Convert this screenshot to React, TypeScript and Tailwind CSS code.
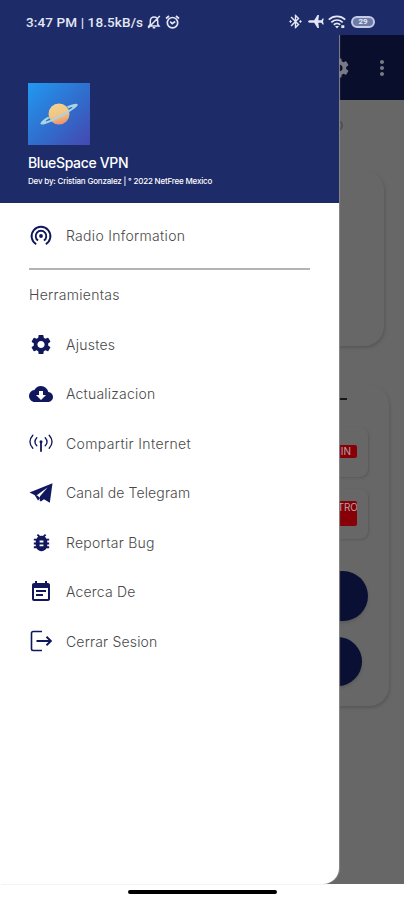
import type { ReactNode } from 'react'
import {
  MdBluetoothConnected,
  MdBugReport,
  MdCloudDownload,
  MdEventNote,
  MdMoreVert,
  MdSettings,
} from 'react-icons/md'

function TetheringIcon() {
  return (
    <svg width="24" height="24" viewBox="0 0 24 24" fill="none" stroke="currentColor" strokeWidth="1.9">
      <path d="M7.2 20.200a9.400 9.400 0 1 1 9.600 0" />
      <path d="M9.100 16.500a5.300 5.300 0 1 1 5.800 0" />
      <circle cx="12" cy="12" r="1.900" fill="currentColor" stroke="none" />
    </svg>
  )
}

function AntennaIcon() {
  return (
    <svg width="24" height="20" viewBox="0 0 24 20" fill="none" stroke="currentColor" strokeWidth="1.3" strokeLinecap="round">
      <path d="M3.800 2.200c-3.500 4-3.500 9 0 13M7.800 4.800c-2.200 2.500-2.200 5.700 0 8M20.200 2.200c3.500 4 3.500 9 0 13M16.200 4.800c2.200 2.500 2.200 5.700 0 8" />
      <path d="M12 9v9" strokeWidth="1.800" />
      <circle cx="12" cy="8.700" r="1.500" fill="currentColor" stroke="none" />
    </svg>
  )
}

function PaperPlaneIcon() {
  return (
    <svg width="24" height="20" viewBox="0 0 24 20">
      <path d="M.5 9.500 23.500.3 20.800 19.800 15 16.300 11.800 18.500 6 12.300z" fill="currentColor" />
      <path d="M7 12.700 18.500 4.500 11 13.300 10.800 17.500z" fill="#ffffff" />
      <path d="M5.500 11.800 9 17.500 11.300 15 8.200 12.600z" fill="currentColor" />
    </svg>
  )
}

function LogoutIcon() {
  return (
    <svg width="22" height="22" viewBox="0 0 22 22" fill="none" stroke="currentColor" strokeWidth="1.6">
      <path d="M12 1.500H3.200Q1.500 1.500 1.500 3.200v15.600q0 1.700 1.700 1.700H12" />
      <path d="M6.500 11H20.500M16.500 6.800l4.300 4.200-4.300 4.200" strokeWidth="1.900" />
    </svg>
  )
}

function BellOffIcon() {
  return (
    <svg width="14" height="14" viewBox="0 0 14 14" fill="none" stroke="currentColor" strokeWidth="1.5">
      <path d="M2 11h10l-1.300-1.700V6C10.700 3.500 9 2 7 2S3.300 3.500 3.300 6v3.300L2 11zM5.700 12.700h2.600M12.800 1 1.200 13" />
    </svg>
  )
}

function AlarmIcon() {
  return (
    <svg width="15" height="14" viewBox="0 0 15 14" fill="none" stroke="currentColor" strokeWidth="1.7">
      <circle cx="7.500" cy="7.700" r="5.200" />
      <path d="M1 3.500 4 1M14 3.500 11 1M5.200 6.700l2 2 3-2.200" />
    </svg>
  )
}

function PlaneIcon() {
  return (
    <svg width="16" height="15" viewBox="0 0 16 15" fill="currentColor">
      <path d="M0 7.500q.5-1.200 2-1.200h4.200L9.500 1H11L10.300 6.300h3L14.600 4.500h1.200L15 7.500l.8 3h-1.200l-1.300-1.800h-3L11 14H9.500L6.200 8.700H2Q.5 8.700 0 7.500z" />
    </svg>
  )
}

function WifiIcon() {
  return (
    <svg width="18" height="14" viewBox="0 0 18 14" fill="none" stroke="currentColor" strokeWidth="1.8">
      <path d="M.8 4.600c4.700-4.300 11.700-4.300 16.400 0M3.300 7.300c3.400-3 8-3 11.400 0M5.800 9.800c2-1.700 4.400-1.700 6.400 0" />
      <path d="M7 11h4l-2 2.500zM13.300 10.300h3v2.700h-3z" fill="currentColor" stroke="none" />
    </svg>
  )
}

function PlanetLogo() {
  return (
    <svg width="62" height="62" viewBox="0 0 62 62">
      <defs>
        <linearGradient id="sky" x1="0" y1="0" x2="1" y2="1">
          <stop offset="0" stopColor="#2199f0" />
          <stop offset="0.5" stopColor="#2f70cf" />
          <stop offset="1" stopColor="#4548b1" />
        </linearGradient>
        <linearGradient id="planet" x1="0" y1="0" x2="0.3" y2="1">
          <stop offset="0" stopColor="#f5d591" />
          <stop offset="0.65" stopColor="#f0c583" />
          <stop offset="1" stopColor="#ee9670" />
        </linearGradient>
      </defs>
      <rect width="62" height="62" fill="url(#sky)" />
      <circle cx="31" cy="31" r="10.500" fill="url(#planet)" />
      <g transform="rotate(-28 31 31)">
        <path
          d="M20.500 28.200C14 28.400 10 29.800 10 31.300c0 1.900 8 3 21 3s21-1.100 21-3c0-1.500-4-2.900-10.500-3.100l.3 2.200c3.200.1 4.400.4 4.400.8 0 .8-5.200 1.200-15.200 1.200s-15.200-.4-15.200-1.200c0-.4 1.200-.7 4.400-.8z"
          fill="#a9d5e2"
        />
      </g>
    </svg>
  )
}

function StatusBar() {
  return (
    <div className="flex h-[35px] items-end justify-between pb-[5px] pl-[26px] pr-[29px] text-[#e4e7f4]">
      <div className="flex items-center gap-[4px]">
        <span className="w-[117px] whitespace-nowrap font-['Roboto',sans-serif] text-[13.5px] font-medium leading-4 tracking-[0.12px]">
          3:47 PM | 18.5kB/s
        </span>
        <BellOffIcon />
        <AlarmIcon />
      </div>
      <div className="flex items-center gap-[4px]">
        <MdBluetoothConnected size={17} />
        <PlaneIcon />
        <WifiIcon />
        <span className="ml-px flex h-[12px] w-[24px] items-center justify-center rounded-full border-2 border-[#c5cbe4] bg-[#6e7ba9] font-['Roboto',sans-serif] text-[8px] font-bold leading-none">
          29
        </span>
      </div>
    </div>
  )
}

// Screen behind the drawer, already dimmed by the scrim
function HomeScreen() {
  return (
    <div className="flex h-[884px] w-full flex-col bg-[#676767] pt-[35px]">
      <div className="flex h-[65px] shrink-0 items-center justify-end gap-[19px] bg-[#080e2b] pr-[10px] text-[#777a84]">
        <MdSettings size={24} />
        <MdMoreVert size={24} />
      </div>
      <div className="flex h-[70px] shrink-0 items-start justify-end pr-[61px] pt-[20px]">
        <div className="h-[11px] w-[11px] rounded-full border-2 border-[#505050]" />
      </div>
      <div className="mr-[20px] h-[176px] shrink-0 rounded-[20px] bg-[#676767] shadow-[1px_2px_3px_#585858]" />
      <div className="mr-[15px] mt-[39px] flex h-[321px] shrink-0 flex-col items-end rounded-[20px] bg-[#676767] shadow-[1px_2px_3px_#585858]">
        <div className="mr-[42px] mt-[13px] h-[2px] w-[80px] shrink-0 bg-[#171717]" />
        <div className="mr-[21px] mt-[27px] flex h-[50px] w-[300px] shrink-0 items-start justify-end rounded-[8px] pr-[11px] pt-[18px] shadow-[1px_1px_2px_#5a5a5a]">
          <div className="flex h-[13px] w-[60px] items-center justify-end rounded-[2px] bg-[#870008] pr-[6px] font-['Inter',sans-serif] text-[10px] text-[#b5a3a4]">
            IN
          </div>
        </div>
        <div className="mr-[21px] mt-[12px] flex h-[50px] w-[300px] shrink-0 items-start justify-end rounded-[8px] pr-[11px] pt-[12px] shadow-[1px_1px_2px_#5a5a5a]">
          <div className="flex h-[25px] w-[60px] items-start justify-end overflow-hidden rounded-[2px] bg-[#870008] font-['Inter',sans-serif] text-[10px] leading-[13px] text-[#b5a3a4]">
            <span className="-mr-px">TRO</span>
          </div>
        </div>
        <div className="mr-[21px] mt-[32px] h-[50px] w-[200px] shrink-0 rounded-full bg-[#0a1033] shadow-[0_2px_3px_#5a5a5a]" />
        <div className="mr-[27px] mt-[16px] h-[49px] w-[200px] shrink-0 rounded-full bg-[#0a1033] shadow-[0_2px_3px_#5a5a5a]" />
      </div>
    </div>
  )
}

interface MenuItemProps {
  icon: ReactNode
  label: string
  tracking: string
}

function MenuItem({ icon, label, tracking }: MenuItemProps) {
  return (
    <li className="flex h-[49.5px] items-center gap-[13px]">
      <span className="flex w-[24px] shrink-0 justify-center text-[#10175c]">{icon}</span>
      <span className={`whitespace-nowrap ${tracking}`}>{label}</span>
    </li>
  )
}

const tools: MenuItemProps[] = [
  { icon: <MdSettings size={25} />, label: 'Ajustes', tracking: 'tracking-[0.25px]' },
  { icon: <MdCloudDownload size={24} />, label: 'Actualizacion', tracking: 'tracking-[0.2px]' },
  { icon: <AntennaIcon />, label: 'Compartir Internet', tracking: 'tracking-[0.37px]' },
  { icon: <PaperPlaneIcon />, label: 'Canal de Telegram', tracking: 'tracking-[0.12px]' },
  { icon: <MdBugReport size={23} />, label: 'Reportar Bug', tracking: 'tracking-[0.27px]' },
  { icon: <MdEventNote size={24} />, label: 'Acerca De', tracking: 'tracking-[0.18px]' },
  { icon: <LogoutIcon />, label: 'Cerrar Sesion', tracking: 'tracking-[0.18px]' },
]

function Drawer() {
  return (
    <aside className="absolute left-0 top-0 h-[884px] w-[339px] rounded-br-[16px] bg-white font-['Inter',sans-serif] text-[14px] font-light text-[#484848] shadow-[1px_0_1px_#888888]">
      <header className="h-[203px] bg-[#1d2b69] pl-[28px] pt-[83px] text-white">
        <PlanetLogo />
        <h1 className="mt-[9px] text-[14px] font-medium leading-[18px] tracking-[-0.35px]">BlueSpace VPN</h1>
        <p className="mt-[4px] whitespace-nowrap text-[8px] font-medium leading-[10px] tracking-[-0.19px]">
          Dev by: Cristian Gonzalez | ° 2022 NetFree Mexico
        </p>
      </header>
      <nav className="px-[29px]">
        <ul className="pt-[8px]">
          <MenuItem icon={<TetheringIcon />} label="Radio Information" tracking="tracking-[0.3px]" />
        </ul>
        <div className="mt-[7px] h-[2px] bg-[#b4b4b4]" />
        <h2 className="mt-[16px] leading-[18px] tracking-[0.27px]">Herramientas</h2>
        <ul className="mt-[16px]">
          {tools.map((item) => (
            <MenuItem key={item.label} {...item} />
          ))}
        </ul>
      </nav>
    </aside>
  )
}

export default function App() {
  return (
    <div className="relative h-[900px] w-[404px] overflow-hidden bg-white">
      <HomeScreen />
      <Drawer />
      <div className="absolute left-0 top-0 w-full bg-[#1d2b69]">
        <StatusBar />
      </div>
      <div className="absolute bottom-[6px] left-[128px] h-[4px] w-[149px] rounded-full bg-black" />
    </div>
  )
}
